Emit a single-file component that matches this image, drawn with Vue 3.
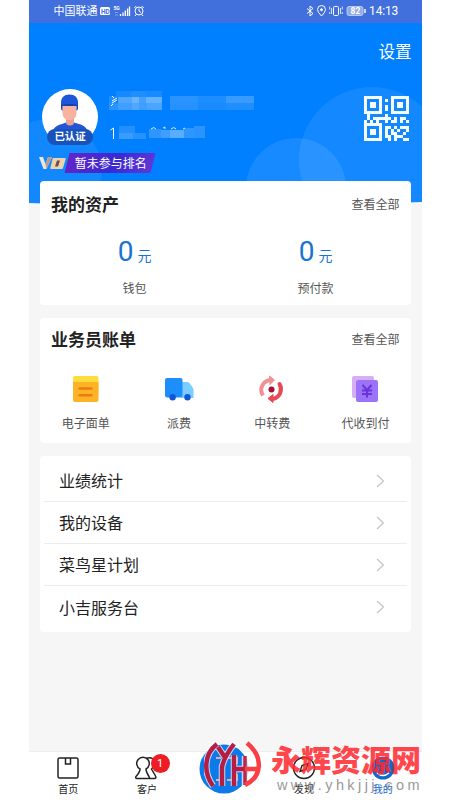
<script setup>
const bills = [
  { label: '电子面单', icon: 'sheet' },
  { label: '派费', icon: 'truck' },
  { label: '中转费', icon: 'cycle' },
  { label: '代收到付', icon: 'yen' },
]
const links = ['业绩统计', '我的设备', '菜鸟星计划', '小吉服务台']
const assets = ['钱包', '预付款']

// name and number are masked by tiles: x, y, width, height, opacity
const mosaic = [
  [0, 5, 7, 7, 0.14], [7, 0, 15, 6, 0.1], [22, 0, 15, 6, 0.15], [37, 0, 16, 6, 0.12],
  [0, 12, 9, 7, 0.2], [9, 6, 14, 6, 0.38], [23, 6, 7, 6, 0.5], [30, 6, 7, 6, 0.32], [37, 6, 16, 6, 0.48],
  [9, 12, 14, 7, 0.3], [23, 12, 7, 7, 0.38], [30, 12, 8, 7, 0.3], [38, 12, 15, 7, 0.36],
  [61, 5, 28, 7, 0.2], [89, 5, 28, 7, 0.14], [117, 5, 28, 7, 0.27],
  [61, 12, 28, 7, 0.18], [89, 12, 28, 7, 0.12], [117, 12, 28, 7, 0.15],
  [10, 35, 16, 7, 0.16], [10, 42, 14, 6, 0.28], [24, 42, 13, 6, 0.18],
  [40, 38, 12, 9, 0.22], [52, 39, 9, 8, 0.3], [61, 39, 14, 8, 0.43], [75, 37, 10, 10, 0.22], [85, 35, 11, 12, 0.2],
]

const qr = [
  '111111000111111',
  '100001010100001',
  '101101000101101',
  '101101010101101',
  '100001010100001',
  '111111000111111',
  '010000010000000',
  '010111111010110',
  '101010010110101',
  '111111000000000',
  '100001011010111',
  '101101010101001',
  '101101010110010',
  '100001011011100',
  '111111001010011',
]
const qrCells = qr.flatMap((row, y) => [...row].map((c, x) => ({ x, y, on: c === '1' }))).filter((c) => c.on)
</script>

<template>
  <div class="screen">
    <div class="phone">
      <svg class="backdrop" width="393" height="206" viewBox="29 0 393 206">
        <defs>
          <clipPath id="dome"><path d="M29 0H422V202Q225 210 29 203Z" /></clipPath>
        </defs>
        <g clip-path="url(#dome)">
          <rect x="29" width="393" height="206" fill="#007fff" />
          <circle cx="372" cy="160" r="73" fill="#fff" fill-opacity=".08" />
          <circle cx="296" cy="188" r="50" fill="#fff" fill-opacity=".09" />
          <circle cx="49" cy="172" r="53" fill="#fff" fill-opacity=".07" />
        </g>
      </svg>

      <div class="status">
        <span class="carrier">中国联通</span>
        <svg width="48" height="12" viewBox="0 0 48 12" fill="none" stroke="#fff">
          <rect x="2" y="2" width="10" height="8" rx="1.5" fill="#fff" stroke="none" />
          <text x="3" y="8.5" font-size="6.5" font-weight="700" fill="#416fdc" stroke="none">HD</text>
          <text x="15.5" y="5" font-size="5" font-weight="700" fill="#fff" stroke="none">5G</text>
          <path d="M17 7.5h3M17 10h3" stroke-opacity=".35" />
          <path d="M22.500 11V9M25 11V7.500M27.300 11V5.500M29.600 11V3.500M31.500 11V1.500" stroke-width="1.300" />
          <circle cx="41" cy="6" r="4" />
          <path d="M41 3.500V6l2 1.500M36.300 3l2-2M45.700 3l-2-2M38 9.500l-1 1.500M44 9.500l1 1.500" />
        </svg>
        <svg class="right" width="61" height="12" viewBox="0 0 61 12" fill="none" stroke="#fff">
          <path d="M1 3.500l6 5L4 11V1l3 2.500-6 5" />
          <path d="M15.500 11Q11.500 7 11.500 4.500a4 4 0 0 1 8 0Q19.500 7 15.500 11Z" />
          <circle cx="15.500" cy="4.700" r="1" fill="#fff" />
          <rect x="27.500" y="1.500" width="5" height="9" rx="1" />
          <path d="M25.500 3v6M34.500 3v6M23.700 1.500v3M23.700 7v2M36.300 1.500v3M36.300 7v2" stroke-width=".8" />
          <rect x="41" y="1.500" width="16" height="9" rx="2" fill="#8fa9ea" stroke="#dce4fb" stroke-width=".7" />
          <path d="M59 4v4" stroke-width="1.500" />
          <text x="44.500" y="9" font-size="8.500" font-weight="700" fill="#fff" stroke="none">82</text>
        </svg>
        <span class="clock">14:13</span>
      </div>

      <div class="settings">设置</div>

      <div class="profile">
        <div class="avatar">
          <svg width="56" height="56" viewBox="0 0 56 56">
            <circle cx="28" cy="28" r="28" fill="#fff" />
            <path d="M10 49Q9 37 20 35L24 33.500h8L37 35Q47 37 46 49Z" fill="#2356d7" />
            <path d="M24 27h8v6q0 3.500-4 3.500T24 33Z" fill="#eda18f" />
            <path d="M20.500 16h14v8q0 7-7 7t-7-7Z" fill="#f8b29f" />
            <path d="M19 20V15Q19 6 27.500 6T36 15v5l-1.500 2v-5h-14v5Z" fill="#1443b5" />
            <path d="M19 14Q19 5.500 27.500 5.500T36 14l-.5 3q-8-2-16 0Z" fill="#1e56d9" />
            <path d="M19 16.500q8.500-2.500 17 0" stroke="#123c9f" fill="none" />
          </svg>
          <span class="verified">已认证</span>
        </div>
        <svg class="masked" width="148" height="54" viewBox="0 0 148 54">
          <path d="M3 5l2 2M3 10l5-3M3 12l5-3M2 15l2-2" stroke="#fff" fill="none" />
          <path d="M1.500 39l3-2V48" stroke="#fff" fill="none" />
          <path d="M42 38q3-3 5 0M54 37l2-1v2M62 38q3-3 5 0M74 38l2-1" stroke="#d8ecff" fill="none" />
          <rect v-for="(m, i) in mosaic" :key="i" :x="m[0]" :y="m[1]" :width="m[2]" :height="m[3]" fill="#cfe9ff" :fill-opacity="m[4]" shape-rendering="crispEdges" />
        </svg>
        <svg class="qr" width="45" height="45" viewBox="0 0 15 15" fill="#f4fcff" shape-rendering="crispEdges">
          <rect v-for="(c, i) in qrCells" :key="i" :x="c.x" :y="c.y" width="1" height="1" />
        </svg>
      </div>

      <div class="rank">
        <svg width="27" height="12" viewBox="0 0 27 12">
          <path d="M0 0h4l2.500 7L9 0h4L7.500 12h-3Z" fill="#efe2d7" />
          <path d="M9 0h4L7.500 12l-1-5Z" fill="#b99c91" />
          <path d="M14 1h12q1 0 .7 1L24 11q-.3 1-1 1H12q-1 0-.7-1L13.500 2q.2-1 .5-1Z" fill="#eed1ad" />
          <path d="M18 3.500h3l-2 6H16Z" fill="#704c43" />
        </svg>
        <span class="ribbon"><span>暂未参与排名</span></span>
      </div>

      <section class="card assets">
        <div class="head"><h2>我的资产</h2><span>查看全部</span></div>
        <div class="pair">
          <div v-for="a in assets" :key="a" class="asset">
            <div class="amount"><b>0</b><span>元</span></div>
            <p>{{ a }}</p>
          </div>
        </div>
      </section>

      <section class="card bills">
        <div class="head"><h2>业务员账单</h2><span>查看全部</span></div>
        <div class="quad">
          <div v-for="b in bills" :key="b.label" class="bill">
            <svg width="30" height="30" viewBox="0 0 30 30">
              <g v-if="b.icon === 'sheet'">
                <rect x="2" y="2" width="25.500" height="20" rx="2" fill="#fddd3b" />
                <path d="M2 8H27.500V26q0 2-2 2H4q-2 0-2-2Z" fill="#fcb326" />
                <path d="M8.500 14.600h12M8.500 21.200h12" stroke="#ed7b12" stroke-width="2.500" stroke-linecap="round" />
              </g>
              <g v-else-if="b.icon === 'truck'">
                <path d="M17 8h6q2 0 3.200 2L29 14q.5 1 .5 2v8H17Z" fill="#79ceff" />
                <rect x="1" y="4" width="17.500" height="19.500" rx="2" fill="#1c8ffc" />
                <circle cx="8.600" cy="23.300" r="3.200" fill="#1056d5" />
                <circle cx="23.500" cy="23.300" r="3.200" fill="#1056d5" />
              </g>
              <g v-else-if="b.icon === 'cycle'" fill="none" stroke-width="4">
                <path d="M6 21.500A10 10 0 0 1 13 6" stroke="#f29193" />
                <path d="M12.500 2L17.500 6 13 10.500Z" fill="#f29193" stroke="#f29193" stroke-width="1" />
                <path d="M22.500 10A10 10 0 0 1 16.500 24.800" stroke="#e74a53" stroke-linecap="round" />
                <path d="M16 20.500V28.500L11 24.500Z" fill="#e74a53" stroke="#e74a53" stroke-width="1" />
                <circle cx="14.500" cy="15.500" r="3" fill="#a70f32" />
              </g>
              <g v-else>
                <rect x="1" y="2" width="22" height="22" rx="2" fill="#d7adf3" />
                <rect x="5" y="6" width="22" height="22" rx="2" fill="#9c72f8" />
                <path d="M11.500 11l4.500 5 4.500-5M11 16.500h10M11 20h10M16 16v7.500" fill="none" stroke="#6934d8" stroke-width="2" />
              </g>
            </svg>
            <p>{{ b.label }}</p>
          </div>
        </div>
      </section>

      <section class="card list">
        <div v-for="l in links" :key="l" class="row">
          <span>{{ l }}</span>
          <svg width="9" height="14" viewBox="0 0 9 14" fill="none" stroke="#c4c4c4" stroke-width="1.200"><path d="M1 1l6.500 6L1 13" /></svg>
        </div>
      </section>

      <nav class="tabs">
        <div class="tab">
          <svg width="24" height="24" viewBox="0 0 24 24" fill="none" stroke="#222" stroke-width="1.500">
            <rect x="2" y="2" width="20" height="20" rx="1.500" />
            <path d="M9.500 2v6h5V2" />
          </svg>
          <span>首页</span>
        </div>
        <div class="tab">
          <svg width="24" height="24" viewBox="0 0 24 24" fill="none" stroke="#222" stroke-width="1.500">
            <path d="M5 13A6.300 6.300 0 1 1 11 13Q11 16 14 20.500 15 22.500 13 22.500H2Q0 22.500 1 20.500 5 16 5 13Z" />
            <path d="M11 2.500Q19 0 19.500 7 19.500 11 16.500 13L20.500 20q1 2.500-1 2.500H14" />
          </svg>
          <i class="badge">1</i>
          <span>客户</span>
        </div>
        <div class="tab center">
          <svg width="50" height="50" viewBox="0 0 50 50">
            <circle cx="25" cy="25" r="24.500" fill="#0c7be9" />
            <path d="M22 14h-5M28 14h10v6M22 36h-5M28 36h10v-6" fill="none" stroke="#e8a9a9" stroke-width="1.800" />
          </svg>
        </div>
        <div class="tab">
          <svg width="24" height="24" viewBox="0 0 24 24" fill="none" stroke="#222" stroke-width="1.400">
            <circle cx="12" cy="12" r="10.500" />
            <path d="M8 15.500l2-6 6-2-2 6Z" />
          </svg>
          <span>发现</span>
        </div>
        <div class="tab active">
          <svg width="24" height="24" viewBox="0 0 24 24" fill="none">
            <circle cx="12" cy="12" r="11.500" fill="#1268cd" />
            <path d="M6 17q6 5 12 0" stroke="#fff" stroke-width="1.500" />
          </svg>
          <span>我的</span>
        </div>
      </nav>
    </div>

    <div class="watermark">
      <svg width="60" height="56" viewBox="0 0 60 56" fill="none">
        <path d="M13 4C0 14-1 32 9 46M14 7L22 19M30 4Q20 17 18 27V46M30 15V46M43 3C60 17 58 37 41 45V16M30 29H54" stroke="#fff" stroke-opacity=".75" stroke-width="6.500" />
        <path d="M13 4C0 14-1 32 9 46M14 7L22 19M30 4Q20 17 18 27V46M30 15V46M30 29H42" stroke="#b51d45" stroke-width="4.500" />
        <path d="M41 16V45" stroke="#c42344" stroke-width="3.500" />
        <path d="M43 3C60 17 58 37 41 45M41 29H54" stroke="#fb3e45" stroke-width="4.500" />
      </svg>
      <div class="brand">
        <strong>永辉资源网</strong>
        <span>www.yhkjjj.com</span>
      </div>
    </div>
  </div>
</template>

<style>
body { background: #fff; }
</style>

<style scoped>
* { box-sizing: border-box; }
.screen {
  position: relative;
  width: 450px;
  height: 800px;
  padding-left: 29px;
  overflow: hidden;
  background: #fff;
  font-family: Roboto, "Noto Sans CJK SC", sans-serif;
  color: #222;
}
.phone {
  position: relative;
  display: flex;
  flex-direction: column;
  width: 393px;
  height: 800px;
  background: #f6f6f6;
}
.phone > * { position: relative; flex-shrink: 0; }
.phone > .backdrop { position: absolute; top: 0; left: 0; }
svg { display: block; flex-shrink: 0; }
h2, p { margin: 0; }
.status {
  display: flex;
  align-items: center;
  height: 22.500px;
  padding: 0 24px 0 24.500px;
  background: #416fdc;
  color: #fff;
  font-size: 11px;
  line-height: 22px;
}
.status .right { margin-left: auto; }
.clock { margin-left: 2px; font-size: 12px; letter-spacing: -.2px; }
.carrier { width: 44px; padding-top: 1px; white-space: nowrap; }
.settings {
  height: 66.500px;
  padding: 18px 10.500px 0 0;
  color: #fff;
  font-size: 16.500px;
  line-height: 24px;
  text-align: right;
}
.profile { display: flex; height: 56px; padding: 0 13.500px 0 13px; }
.avatar { position: relative; width: 56px; height: 56px; }
.verified {
  position: absolute;
  left: 5px;
  top: 40px;
  width: 46px;
  height: 16px;
  border-radius: 8px;
  background: #1952bb;
  color: #fff;
  font-size: 10.400px;
  font-weight: 700;
  line-height: 16px;
  text-align: center;
}
.masked { margin-left: 11px; margin-top: 2px; }
.qr { margin: 6.500px 0 0 auto; }
.rank { display: flex; align-items: center; height: 36px; padding-left: 10px; }
.ribbon {
  width: 86px;
  height: 20px;
  margin-left: .500px;
  transform: skewX(-14deg);
  background: linear-gradient(110deg, #6425c7, #382ad2 55%, #6337d5);
  color: #fff;
  font-size: 12px;
  line-height: 22px;
  text-align: center;
}
.ribbon span { display: block; transform: skewX(14deg); white-space: nowrap; padding-left: 2px; }
.card {
  width: 371px;
  margin-left: 11px;
  border-radius: 4px;
  background: #fff;
}
.assets { height: 124px; }
.bills { height: 125px; margin-top: 13px; }
.list { height: 176px; margin-top: 13px; padding: 4px; }
.head {
  display: flex;
  justify-content: space-between;
  align-items: center;
  height: 44px;
  padding: 0 11.500px 0 11px;
  font-size: 12px;
  color: #555;
}
.head h2 { font-size: 17px; font-weight: 700; color: #222; }
.bills .head { height: 41px; }
.pair { display: grid; grid-template-columns: 189px 173px; }
.pair p, .quad p { color: #555; font-size: 12px; line-height: 18px; text-align: center; white-space: nowrap; }
.amount {
  display: flex;
  justify-content: center;
  align-items: baseline;
  gap: 4px;
  height: 55px;
  padding-top: 10px;
  color: #1873d3;
  font-size: 14px;
  line-height: 34px;
}
.amount b { font-size: 28px; font-weight: 400; }
.quad { display: grid; grid-template-columns: repeat(4, 93.300px); width: 371px; margin-left: -1px; }
.bill { display: flex; flex-direction: column; align-items: center; padding-top: 15px; }
.bill p { margin-top: 11px; }
.row {
  display: flex;
  justify-content: space-between;
  align-items: center;
  height: 42px;
  padding: 0 22px 0 15px;
  border-bottom: 1px solid #ececec;
  font-size: 16px;
}
.row span { padding-bottom: 1px; }
.row:last-child { border-bottom: 0; }
.tabs {
  display: flex;
  justify-content: space-between;
  height: 49px;
  margin-top: auto;
  background: #fff;
  border-top: 1px solid #eee;
}
.tab {
  position: relative;
  display: flex;
  flex: 1;
  flex-direction: column;
  align-items: center;
  gap: 2px;
  padding-top: 4px;
  font-size: 10px;
  line-height: 15px;
}
.center svg { margin: -12px 3px 0 0; }
.active { color: #1268cd; }
.badge {
  position: absolute;
  left: 43px;
  top: 2px;
  width: 19px;
  height: 19px;
  border-radius: 50%;
  background: #ee1d24;
  color: #fff;
  font-style: normal;
  font-size: 11px;
  line-height: 19px;
  text-align: center;
}
.watermark { position: absolute; left: 204px; top: 740px; display: flex; }
.brand { display: flex; flex-direction: column; margin-left: 7px; padding-top: 3px; }
.brand strong {
  color: #ff2930;
  opacity: .86;
  font-size: 30px;
  font-weight: 900;
  line-height: 35px;
  white-space: nowrap;
}
.brand span {
  margin: -1px 0 0 6px;
  color: #888;
  opacity: .85;
  font-family: "Liberation Sans", sans-serif;
  font-size: 14.500px;
  letter-spacing: 3.400px;
  line-height: 17px;
  white-space: nowrap;
}
</style>
